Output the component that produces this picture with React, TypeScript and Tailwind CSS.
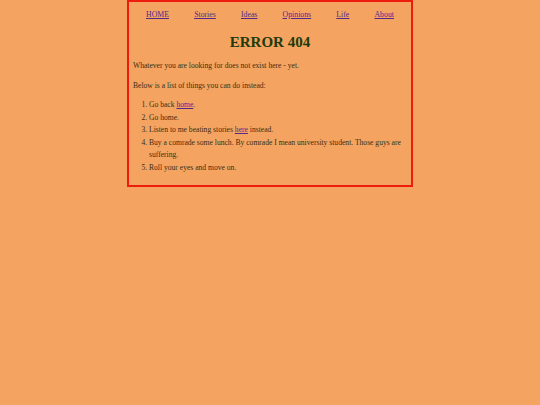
import React from 'react';

const navLinks = ['HOME', 'Stories', 'Ideas', 'Opinions', 'Life', 'About'];

function Link({ children }: { children: React.ReactNode }) {
  return <a href="#" className="text-[#55288a] underline">{children}</a>;
}

export default function App() {
  return (
    <div className="min-h-screen bg-[#f4a460] font-['Liberation_Serif',serif]">
      <div className="mx-auto w-[286px] border-2 border-[#ee1c0c] px-[4px] pt-[7px] pb-[11px] text-[7.6px] leading-[12.5px] text-[#3a2e12]">
        <nav className="flex justify-between px-[13px] text-[7.8px]">
          {navLinks.map(l => (
            <Link key={l}>{l}</Link>
          ))}
        </nav>

        <h1 className="mt-[10px] text-center text-[15px] leading-[20px] font-bold text-[#203a0c]">ERROR 404</h1>

        <p className="mt-[8.5px]">Whatever you are looking for does not exist here - yet.</p>
        <p className="mt-[7.5px]">Below is a list of things you can do instead:</p>

        <ol className="mt-[6.5px] list-decimal pl-[16px]">
          <li>Go back <Link>home</Link>.</li>
          <li>Go home.</li>
          <li>Listen to me beating stories <Link>here</Link> instead.</li>
          <li>Buy a comrade some lunch. By comrade I mean university student. Those guys are suffering.</li>
          <li>Roll your eyes and move on.</li>
        </ol>
      </div>
    </div>
  );
}
